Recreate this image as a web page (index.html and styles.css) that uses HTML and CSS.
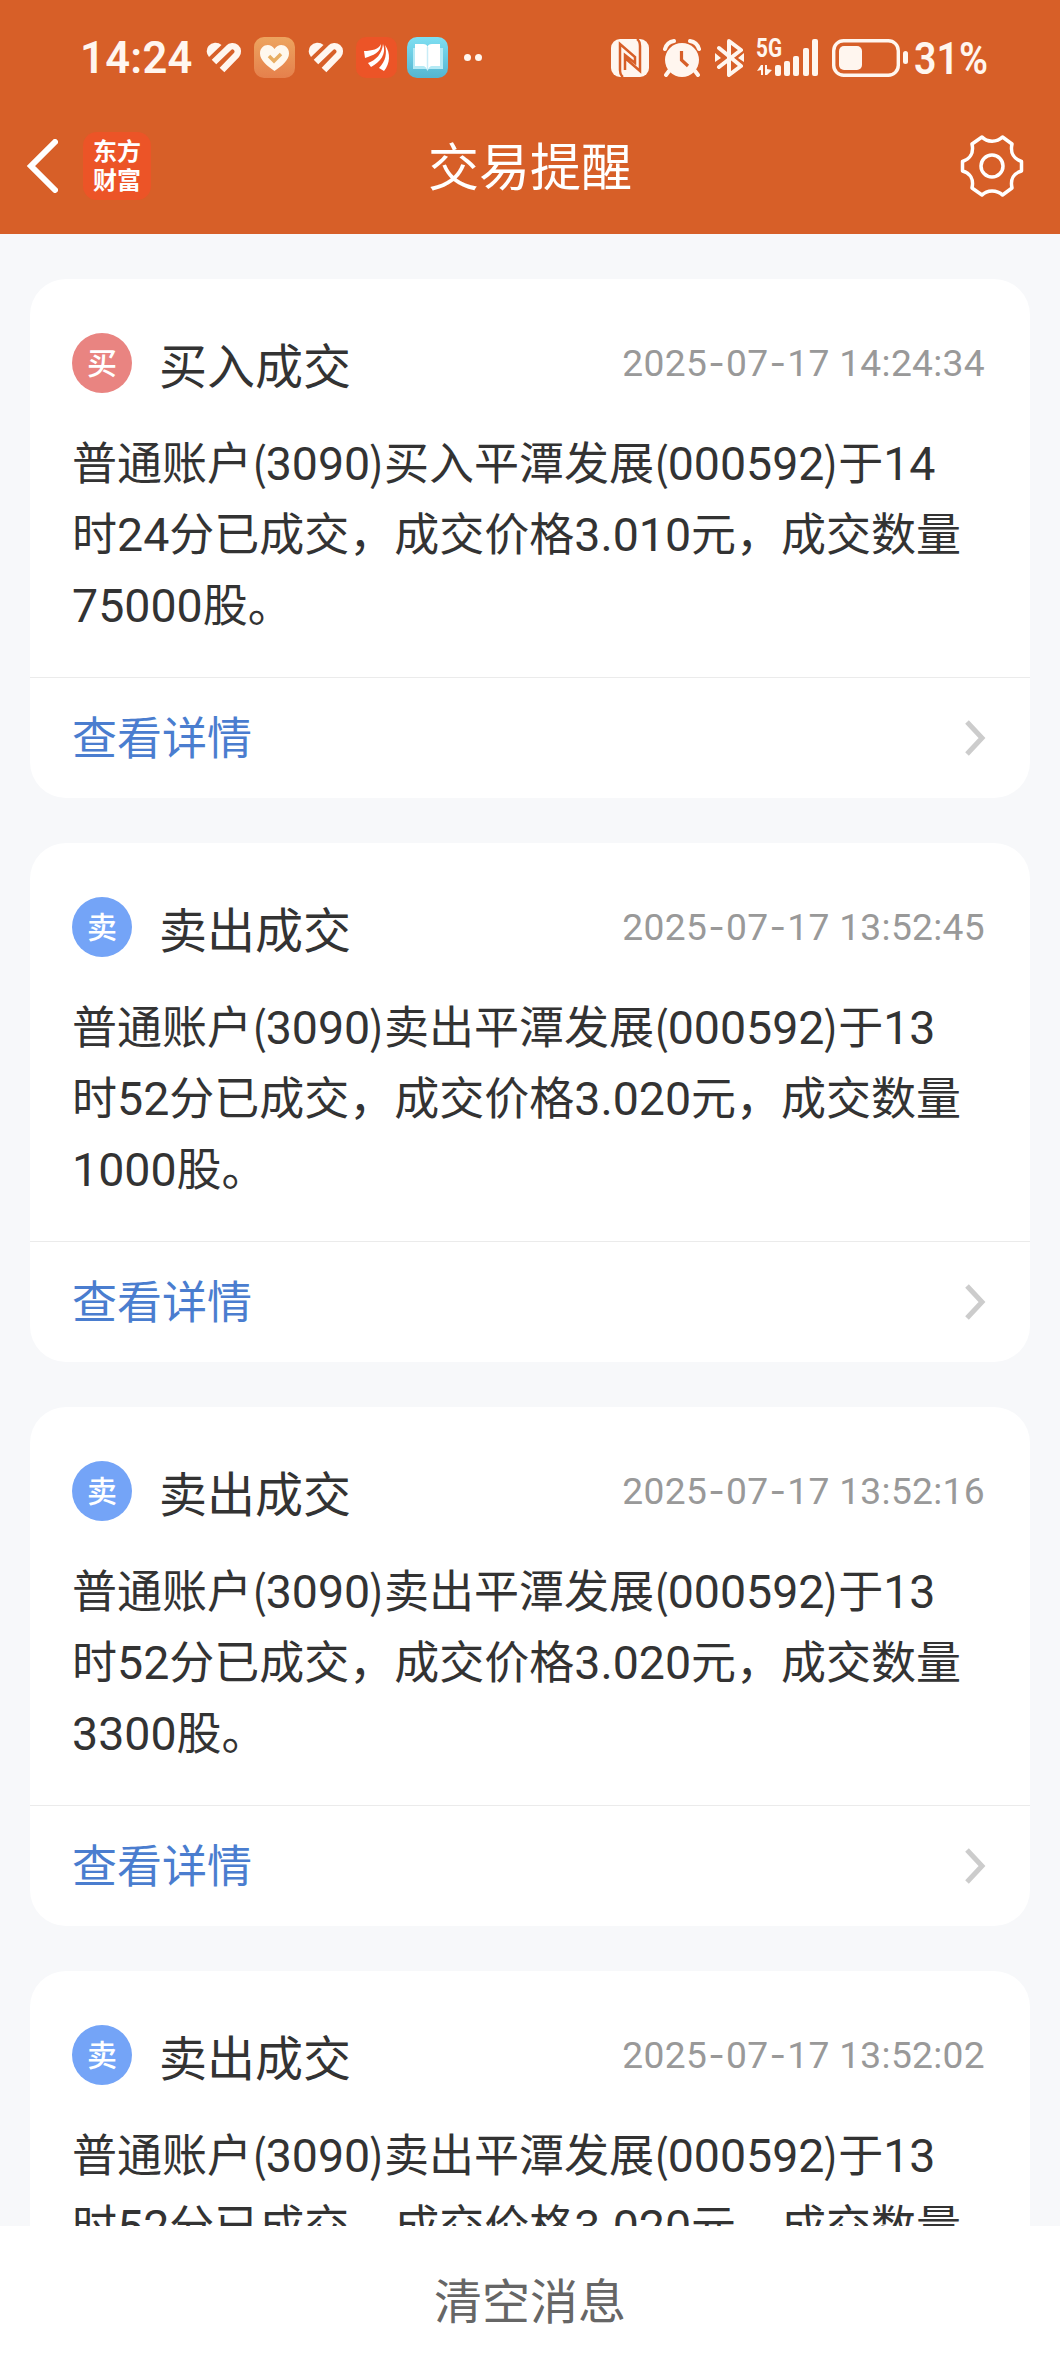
FILE: index.html
```html
<!DOCTYPE html>
<html lang="zh-CN">
<head>
  <meta charset="UTF-8">
  <title>交易提醒</title>
  <link rel="stylesheet" href="styles.css">
</head>
<body>
  <div class="screen">
    <header class="header">
      <div class="status-bar">
        <div class="status-left">
          <span class="clock">14:24</span>
          <svg class="ic-heart" width="36" height="32" viewBox="0 0 36 32"><path class="lobe" d="M15.500 3L3 15A8.500 8.500 0 0 1 2.500 4A9 9 0 0 1 15.500 3Z"/><path d="M8 20L22.500 6A5.200 5.200 0 0 1 30.500 13L16 28"/></svg>
          <svg class="ic-app" width="41" height="41" viewBox="0 0 41 41">
            <defs><linearGradient id="gold" x1="0" y1="0" x2="0" y2="1"><stop offset="0" stop-color="#eda45f"/><stop offset="1" stop-color="#e5804c"/></linearGradient></defs>
            <rect width="41" height="41" rx="10" fill="url(#gold)"/>
            <path d="M20.500 34C13 29 6 23 6 16.500C6 8 16 5 20.500 12C25 5 35 8 35 16.500C35 23 28 29 20.500 34Z" fill="#fff8ee"/>
            <path d="M15 19L20 24L27 17" fill="none" stroke="#e8ae62" stroke-width="3.500"/>
          </svg>
          <svg class="ic-heart" width="36" height="32" viewBox="0 0 36 32"><path class="lobe" d="M15.500 3L3 15A8.500 8.500 0 0 1 2.500 4A9 9 0 0 1 15.500 3Z"/><path d="M8 20L22.500 6A5.200 5.200 0 0 1 30.500 13L16 28"/></svg>
          <svg class="ic-app" width="41" height="41" viewBox="0 0 41 41">
            <rect width="41" height="41" rx="10" fill="#ec5427"/>
            <path d="M8 14C16 14 23 12 25 7C25 16 17 18 9 21ZM12 26C20 23 26 17 27 7C31 17 24 25 15 30ZM29 8C35 16 34 27 28 34L23 31C30 24 31 16 29 8Z" fill="#fff"/>
          </svg>
          <svg class="ic-app" width="41" height="41" viewBox="0 0 41 41">
            <defs><linearGradient id="sky" x1="0" y1="0" x2="0" y2="1"><stop offset="0" stop-color="#7edff2"/><stop offset="1" stop-color="#55b5d0"/></linearGradient></defs>
            <rect width="41" height="41" rx="10" fill="url(#sky)"/>
            <path d="M6 11H36V32H6Z" fill="#b5eaf5"/>
            <path d="M8 7H16Q20 7 20.500 10Q21 7 25 7H33V29H25Q22 29 20.500 34Q19 29 16 29H8Z" fill="#fff"/>
            <path d="M20.500 10V33" stroke="#c8ecf7" stroke-width="1.500"/>
          </svg>
          <span class="dots"><i></i><i></i></span>
        </div>
        <div class="status-right">
          <svg class="ic-nfc" width="38" height="38" viewBox="0 0 38 38">
            <rect width="38" height="38" rx="9" fill="#fff6ef"/>
            <path d="M12 38Q9 36 9 31V5L24 18V24L14 16V31M26 0Q29 2 29 7V32L14 19" fill="none" stroke="#d75f28" stroke-width="2.500"/>
          </svg>
          <svg class="ic-alarm" width="38" height="38" viewBox="0 0 38 38">
            <circle cx="19" cy="21" r="17" fill="#fff6ef"/>
            <path d="M2 10Q4 3 11 2M36 10Q34 3 27 2M6 32L3 36M32 32L35 36" fill="none" stroke="#fff6ef" stroke-width="4" stroke-linecap="round"/>
            <path d="M18.500 12V21L25 27" fill="none" stroke="#d75f28" stroke-width="3.200"/>
          </svg>
          <svg class="ic-bt" width="30" height="38" viewBox="0 0 30 38">
            <path d="M4 9L26 27L14 36V2L26 11L4 28" fill="none" stroke="#fff6ef" stroke-width="4" stroke-linejoin="round" stroke-linecap="round"/>
            <path d="M0 14L6 19L0 23ZM29 14L23 19L29 23Z" fill="#fff6ef"/>
          </svg>
          <svg class="ic-signal" width="62" height="39" viewBox="0 0 62 39">
            <text x="0" y="19" class="net" textLength="26" lengthAdjust="spacingAndGlyphs">5G</text>
            <path d="M1 33L5 27H7V37H5V32ZM9 27H11V31L16 32L11 37H9Z" fill="#fff6ef"/>
            <g fill="#fff6ef"><rect x="19" y="27" width="6" height="11" rx="2"/><rect x="28" y="23" width="6" height="15" rx="2"/><rect x="37" y="18" width="6" height="20" rx="2"/><rect x="47" y="10" width="6" height="28" rx="2"/><rect x="56" y="1" width="6" height="37" rx="2"/></g>
          </svg>
          <svg class="ic-battery" width="76" height="38" viewBox="0 0 76 38">
            <rect x="1.700" y="1.700" width="64.600" height="34.600" rx="10" fill="none" stroke="#fff6ef" stroke-width="3.400"/>
            <rect x="7" y="7" width="23" height="24" rx="5" fill="#fff6ef"/>
            <rect x="71" y="12" width="5" height="13" rx="2.500" fill="#fff6ef"/>
          </svg>
          <svg class="percent" width="73" height="50" viewBox="0 0 73 50"><text x="0" y="41" textLength="74" lengthAdjust="spacingAndGlyphs">31%</text></svg>
        </div>
      </div>
      <div class="nav">
        <div class="nav-left">
          <svg width="32" height="54" viewBox="0 0 32 54"><path d="M29 3L5 27L29 51" fill="none" stroke="#fff" stroke-width="6" stroke-linecap="round"/></svg>
          <div class="logo">东方<br>财富</div>
        </div>
        <h1 class="nav-title">交易提醒</h1>
        <svg class="gear" width="64" height="64" viewBox="0 0 64 64">
          <path d="M22 3C27 8.500 37 8.500 42.500 3L52 10C50 19 54 25 61.500 27.500V37C54 39 50 45 52 54L42.500 61C37 55.500 27 55.500 22 61L12 54C14 45 10 39 2.500 37V27.500C10 25 14 19 12 10Z"/>
          <circle cx="32" cy="32" r="11"/>
        </svg>
      </div>
    </header>

    <main class="list">
      <section class="card">
        <div class="card-head">
          <span class="badge buy">买</span>
          <h2 class="card-title">买入成交</h2>
          <time class="card-time">2025<i>-</i>07<i>-</i>17 14:24:34</time>
        </div>
        <p class="card-text">普通账户(<b class="code">3090</b>)买入平潭发展(<b class="code">000592</b>)于<b>14</b><br>时<b>24</b>分已成交，成交价格<b>3.010</b>元，成交数量<br><b>75000</b>股。</p>
        <div class="card-foot">
          <span>查看详情</span>
          <svg class="arrow" width="24" height="36" viewBox="0 0 24 36"><path d="M3 2L18 18L3 34"/></svg>
        </div>
      </section>

      <section class="card">
        <div class="card-head">
          <span class="badge sell">卖</span>
          <h2 class="card-title">卖出成交</h2>
          <time class="card-time">2025<i>-</i>07<i>-</i>17 13:52:45</time>
        </div>
        <p class="card-text">普通账户(<b class="code">3090</b>)卖出平潭发展(<b class="code">000592</b>)于<b>13</b><br>时<b>52</b>分已成交，成交价格<b>3.020</b>元，成交数量<br><b>1000</b>股。</p>
        <div class="card-foot">
          <span>查看详情</span>
          <svg class="arrow" width="24" height="36" viewBox="0 0 24 36"><path d="M3 2L18 18L3 34"/></svg>
        </div>
      </section>

      <section class="card">
        <div class="card-head">
          <span class="badge sell">卖</span>
          <h2 class="card-title">卖出成交</h2>
          <time class="card-time">2025<i>-</i>07<i>-</i>17 13:52:16</time>
        </div>
        <p class="card-text">普通账户(<b class="code">3090</b>)卖出平潭发展(<b class="code">000592</b>)于<b>13</b><br>时<b>52</b>分已成交，成交价格<b>3.020</b>元，成交数量<br><b>3300</b>股。</p>
        <div class="card-foot">
          <span>查看详情</span>
          <svg class="arrow" width="24" height="36" viewBox="0 0 24 36"><path d="M3 2L18 18L3 34"/></svg>
        </div>
      </section>

      <section class="card">
        <div class="card-head">
          <span class="badge sell">卖</span>
          <h2 class="card-title">卖出成交</h2>
          <time class="card-time">2025<i>-</i>07<i>-</i>17 13:52:02</time>
        </div>
        <p class="card-text">普通账户(<b class="code">3090</b>)卖出平潭发展(<b class="code">000592</b>)于<b>13</b><br>时<b>52</b>分已成交，成交价格<b>3.020</b>元，成交数量</p>
      </section>
    </main>

    <footer class="clear-bar">清空消息</footer>
  </div>
</body>
</html>
```
FILE: styles.css
```css
* {
  box-sizing: border-box;
}
body {
  margin: 0;
  font-family: "Noto Sans CJK SC", sans-serif;
  background: #f7f8fa;
  color: #333;
}
.screen {
  display: flex;
  flex-direction: column;
  height: 2376px;
  overflow: hidden;
}

/* header */
.header {
  flex: none;
  height: 234px;
  background: #d75f28;
  color: #fff;
}
.status-bar {
  display: flex;
  justify-content: space-between;
  height: 115px;
  padding: 0 73px 0 80px;
  color: #fff6ef;
}
.status-left,
.status-right {
  display: flex;
  align-items: center;
}
.clock {
  width: 126px;
  padding-top: 2px;
  font-family: Roboto, sans-serif;
  font-size: 43.5px;
  font-weight: 600;
  letter-spacing: 0.3px;
  line-height: 60px;
}
.percent {
  overflow: visible;
  fill: #fff6ef;
  font-family: Roboto, sans-serif;
  font-size: 43.5px;
  font-weight: 600;
}
.ic-heart {
  margin-right: 12px;
}
.ic-heart path {
  fill: none;
  stroke: #fff6ef;
  stroke-width: 6.5;
}
.ic-heart .lobe {
  fill: #fff6ef;
  stroke: none;
}
.ic-app {
  margin-right: 10px;
}
.ic-app + .ic-heart {
  margin-left: 3px;
}
.dots {
  display: flex;
  gap: 4px;
  margin-left: 6px;
}
.dots i {
  width: 7px;
  height: 7px;
  border-radius: 50%;
  background: #fff6ef;
}
.ic-nfc {
  margin-right: 14px;
}
.ic-alarm {
  margin-right: 14px;
}
.ic-bt {
  margin-right: 11px;
}
.net {
  font-family: Roboto, sans-serif;
  font-size: 25px;
  font-weight: 700;
  fill: #fff6ef;
}
.ic-signal {
  overflow: visible;
  margin-right: 14px;
}
.ic-battery {
  margin-right: 6px;
}
.nav {
  display: flex;
  align-items: center;
  justify-content: space-between;
  height: 101px;
  padding: 0 36px 0 26px;
}
.nav-left {
  display: flex;
  align-items: center;
  gap: 25px;
  width: 200px;
}
.logo {
  width: 68px;
  height: 68px;
  padding-top: 3px;
  border-radius: 14px;
  background: #ec5427;
  font-size: 24px;
  font-weight: 700;
  line-height: 29px;
  text-align: center;
}
.nav-title {
  margin: 0;
  padding: 0 0 3px 10px;
  font-size: 51px;
  font-weight: 400;
  line-height: 60px;
}
.gear {
  margin-left: 136px;
  fill: none;
  stroke: #fff;
  stroke-width: 3.5;
  stroke-linejoin: round;
}

/* message cards */
.list {
  flex: 1;
  min-height: 0;
  padding: 45px 30px 0;
  overflow: hidden;
}
.card {
  height: 519px;
  margin-bottom: 45px;
  border-radius: 36px;
  background: #fff;
}
.card-head {
  display: flex;
  align-items: center;
  height: 146px;
  padding: 22px 45px 0 42px;
}
.badge {
  width: 60px;
  height: 60px;
  border-radius: 50%;
  color: #fff;
  font-size: 30px;
  font-weight: 500;
  line-height: 56px;
  text-align: center;
}
.buy {
  background: #e98481;
}
.sell {
  background: #74a4f7;
}
.card-title {
  margin: 0 0 1px 27px;
  font-size: 48px;
  font-weight: 400;
  line-height: 60px;
}
.card-time {
  margin-left: auto;
  color: #999;
  font-family: Roboto, sans-serif;
  font-size: 37.2px;
  letter-spacing: 0.3px;
}
.card-time i {
  padding: 0 1px;
  font-family: Inter, sans-serif;
  font-size: 36px;
  font-style: normal;
}
.card-text {
  height: 252px;
  margin: 0;
  padding: 0 0 0 42px;
  font-size: 45px;
  line-height: 71px;
  white-space: nowrap;
}
.card-text b {
  font-family: Roboto, sans-serif;
  font-size: 46.5px;
  font-weight: 400;
  line-height: 1;
}
.card-text .code {
  margin: 0 -1.5px;
}
.card-foot {
  display: flex;
  align-items: center;
  justify-content: space-between;
  height: 121px;
  padding: 0 42px;
  border-top: 1px solid #ebebeb;
  color: #4a7dcf;
  font-size: 45px;
}
.card-foot span {
  padding-bottom: 5px;
}
.arrow path {
  fill: none;
  stroke: #ccc;
  stroke-width: 5;
}

.clear-bar {
  flex: none;
  height: 150px;
  background: #fff;
  color: #666;
  font-size: 48px;
  line-height: 145px;
  text-align: center;
}
```
